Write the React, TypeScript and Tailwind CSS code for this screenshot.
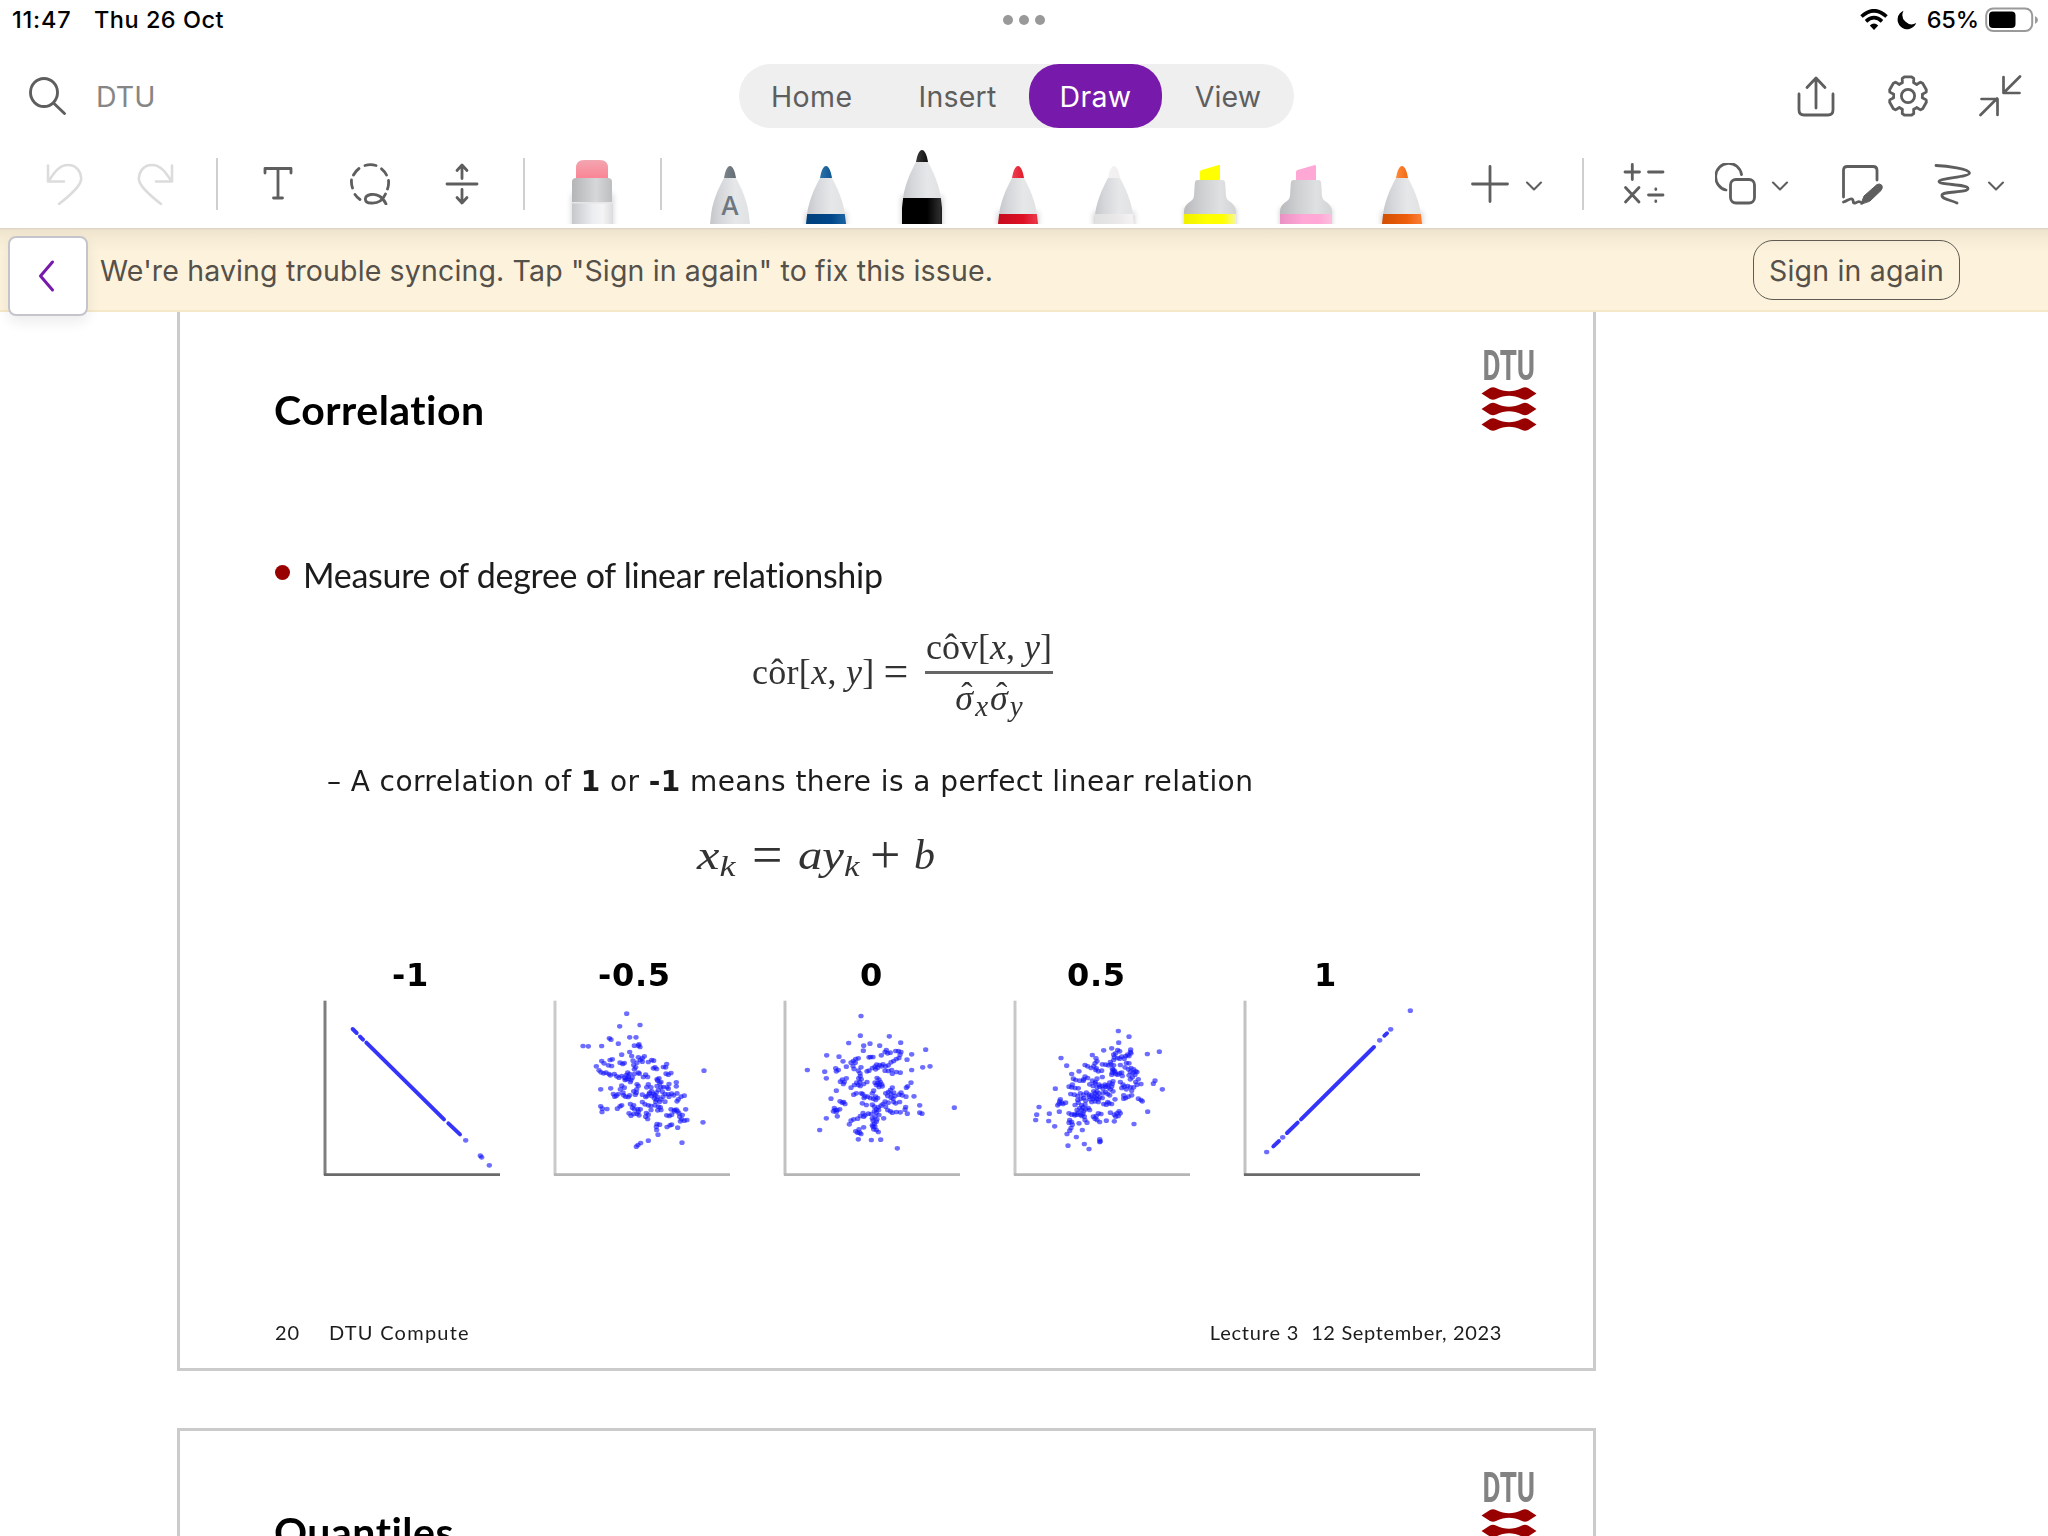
import React from "react";

const INK = "#5e5e5e";

function Ico({ w = 42, h = 42, className = "", sw = 2.8, color = INK, children }: { w?: number; h?: number; className?: string; sw?: number; color?: string; children: React.ReactNode }) {
  return (
    <svg width={w} height={h} viewBox={`0 0 ${w} ${h}`} className={`shrink-0 ${className}`} fill="none" stroke={color} strokeWidth={sw} strokeLinecap="round" strokeLinejoin="round">
      {children}
    </svg>
  );
}

const Chevron = ({ className = "" }: { className?: string }) => (
  <Ico w={18} h={12} sw={2.1} className={className}><path d="M2 2.5 L9 9.5 L16 2.5" /></Ico>
);

const Divider = ({ className = "" }: { className?: string }) => (
  <div className={`flex shrink-0 justify-center ${className}`}><div className="h-[52px] w-[2px] bg-[#cfcfcf]" /></div>
);

function gearPath() {
  const pts: string[] = [];
  for (let i = 0; i < 6; i++) {
    for (const [da, r] of [[-37, 14.6], [-23, 14.4], [-18, 18.6], [-11, 19.4], [11, 19.4], [18, 18.6], [23, 14.4]]) {
      const a = ((i * 60 + da - 90) * Math.PI) / 180;
      pts.push(`${(21 + r * Math.cos(a)).toFixed(2)} ${(21 + r * Math.sin(a)).toFixed(2)}`);
    }
  }
  return `M${pts.join("L")}Z`;
}

function Pen({ id, tip, band, selected = false, letter }: { id: string; tip: [string, string]; band?: [string, string, string]; selected?: boolean; letter?: string }) {
  return (
    <svg width="96" height="76" viewBox="-18 0 96 76" className="shrink-0">
      <defs>
        <linearGradient id={`${id}b`}><stop offset="0" stopColor="#bdbec1" /><stop offset=".3" stopColor="#d5d6d9" /><stop offset=".6" stopColor="#e6e7e9" /><stop offset="1" stopColor="#dfe0e2" /></linearGradient>
        <linearGradient id={`${id}t`}><stop offset="0" stopColor={tip[0]} /><stop offset="1" stopColor={tip[1]} /></linearGradient>
        {band && <linearGradient id={`${id}c`}><stop offset="0" stopColor={band[0]} /><stop offset=".6" stopColor={band[1]} /><stop offset=".85" stopColor={band[2]} /><stop offset="1" stopColor={band[1]} /></linearGradient>}
        <clipPath id={`${id}k`}><path d="M24 30 H36 C42 41 48 54 49.3 70 L50 76 V100 H10 V76 L10.7 70 C12 54 18 41 24 30Z" /></clipPath>
        <filter id={`${id}f`} x="-50%" y="-50%" width="200%" height="200%"><feGaussianBlur stdDeviation="3" /></filter>
      </defs>
      <g transform={selected ? "translate(0 -16)" : undefined}>
        {band && <rect x="10" y="64" width="40" height="40" fill="#000" opacity=".22" filter={`url(#${id}f)`} />}
        <g clipPath={`url(#${id}k)`}>
          <rect x="5" y="28" width="50" height="80" fill={`url(#${id}b)`} />
          {band && <rect x="5" y="66" width="50" height="40" fill={`url(#${id}c)`} />}
        </g>
        <path d="M24 30 C25 24 27 18 30 18 C33 18 35 24 36 30Z" fill={`url(#${id}t)`} />
        {letter && <text x="30" y="66.5" textAnchor="middle" fontFamily="Inter, sans-serif" fontWeight="500" fontSize="26" fill="#6c7782">{letter}</text>}
      </g>
    </svg>
  );
}

function Marker({ id, c }: { id: string; c: [string, string, string] }) {
  return (
    <svg width="96" height="76" viewBox="-18 0 96 76" className="shrink-0">
      <defs>
        <linearGradient id={`${id}b`}><stop offset="0" stopColor="#b9babd" /><stop offset=".35" stopColor="#cfd0d2" /><stop offset=".7" stopColor="#dfe0e2" /><stop offset="1" stopColor="#d3d4d6" /></linearGradient>
        <linearGradient id={`${id}c`}><stop offset="0" stopColor={c[0]} /><stop offset=".45" stopColor={c[1]} /><stop offset=".75" stopColor={c[1]} /><stop offset="1" stopColor={c[2]} /></linearGradient>
        <filter id={`${id}f`} x="-50%" y="-50%" width="200%" height="200%"><feGaussianBlur stdDeviation="2.5" /></filter>
      </defs>
      <rect x="4" y="60" width="52" height="30" fill="#000" opacity=".2" filter={`url(#${id}f)`} />
      <path d="M20 32 V24 Q20 22.5 21.5 22 L38 17.2 Q40 16.6 40 18.5 V32Z" fill={c[1]} />
      <path d="M18 32 H42 Q45 32 45.2 35 L46 48 Q46.2 51 49 53 Q56 57 56 64 V66 H4 V64 Q4 57 11 53 Q13.8 51 14 48 L14.8 35 Q15 32 18 32Z" fill={`url(#${id}b)`} />
      <rect x="4" y="66" width="52" height="10" fill={`url(#${id}c)`} />
    </svg>
  );
}

function Eraser() {
  return (
    <svg width="100" height="76" viewBox="0 0 100 76" className="shrink-0">
      <defs>
        <linearGradient id="erp" x1="0" y1="0" x2="0" y2="1"><stop offset="0" stopColor="#f2a6b0" /><stop offset="1" stopColor="#fb8394" /></linearGradient>
        <linearGradient id="erg"><stop offset="0" stopColor="#b4b5b7" /><stop offset=".6" stopColor="#d6d7d9" /><stop offset="1" stopColor="#bdbec0" /></linearGradient>
        <linearGradient id="erw"><stop offset="0" stopColor="#c6c7ca" /><stop offset=".5" stopColor="#ecedf0" /><stop offset=".75" stopColor="#f4f4f6" /><stop offset="1" stopColor="#dcdcdf" /></linearGradient>
        <filter id="erf" x="-50%" y="-50%" width="200%" height="200%"><feGaussianBlur stdDeviation="3" /></filter>
      </defs>
      <rect x="30" y="46" width="41" height="40" fill="#000" opacity=".18" filter="url(#erf)" />
      <path d="M34 31 V20 Q34 12 42 12 H58 Q66 12 66 20 V31Z" fill="url(#erp)" />
      <path d="M30 54 V34 Q30 30 34 30 H66 Q70 30 70 34 V54Z" fill="url(#erg)" />
      <rect x="30" y="54" width="41" height="22" fill="url(#erw)" />
      <rect x="30" y="54" width="41" height="1.5" fill="#e6e6e8" />
    </svg>
  );
}

/* Scatter samples, three units per pixel; x is measured from the vertical axis. */
const NEG_HALF = "215,191 194,229 255,225 163,265 168,269 224,262 243,262 190,281 84,288 100,289 140,288 238,287 250,287 255,291 252,283 224,306 200,314 230,318 172,328 165,330 140,333 147,340 124,349 170,348 160,346 195,338 208,339 203,342 250,322 262,325 268,319 256,330 290,330 296,332 234,332 280,336 262,335 246,338 236,345 242,352 238,358 300,352 305,357 295,355 335,342 332,352 325,351 340,374 348,369 333,371 132,361 138,367 146,370 153,368 162,372 166,376 178,372 185,379 192,383 200,378 209,383 214,388 220,380 224,372 228,390 232,383 226,396 238,372 218,368 214,375 250,368 253,371 265,381 278,381 272,374 220,386 210,390 312,385 308,392 318,396 314,400 306,388 364,397 364,409 137,418 167,415 200,407 208,413 196,418 246,403 250,408 245,418 280,403 275,412 288,412 318,412 325,411 336,412 340,416 342,402 306,408 310,420 304,428 290,424 296,432 284,428 300,436 308,441 290,438 298,445 305,449 314,455 302,455 318,448 324,440 330,432 322,425 175,432 184,437 179,440 190,432 206,436 212,440 220,441 224,436 236,424 241,434 244,428 204,428 262,434 272,441 282,432 276,438 340,433 350,431 356,436 366,430 378,440 388,437 370,448 366,454 342,440 330,455 137,469 142,476 156,477 141,486 187,476 195,469 200,466 226,462 236,466 232,473 238,478 248,477 256,478 250,485 262,456 270,463 280,466 288,468 300,466 310,470 316,472 318,480 308,481 222,490 228,497 236,492 246,491 252,496 274,489 280,494 272,500 278,507 288,480 348,478 358,484 364,479 368,484 372,490 358,480 335,496 343,498 350,494 374,500 382,495 392,478 380,508 388,512 396,510 376,514 306,522 314,524 304,530 305,540 345,526 336,531 350,524 368,533 309,554 280,572 257,579 244,590 249,585 381,578 447,362 444,517";
const ZERO = "228,198 226,257 313,259 191,279 236,287 255,281 284,287 347,278 422,299 125,316 162,320 174,334 235,302 304,300 300,306 308,310 316,308 332,303 340,303 348,306 345,314 289,316 257,321 264,321 252,322 212,327 220,325 205,333 198,338 211,338 380,313 366,329 342,324 334,327 326,333 318,337 152,355 154,364 160,360 184,350 204,348 207,357 228,352 275,344 284,345 290,349 294,343 270,350 262,354 278,353 302,349 310,346 300,362 310,363 320,360 322,371 334,366 346,368 246,364 252,362 272,358 67,360 119,365 124,385 220,362 225,370 226,378 221,385 229,388 172,389 178,396 184,385 175,402 166,395 224,396 215,398 208,405 198,413 226,408 236,402 246,396 220,405 276,384 282,389 286,396 278,399 270,398 290,403 282,404 292,409 282,411 274,405 380,360 413,352 435,349 378,398 368,409 364,413 154,422 206,434 214,430 233,432 240,439 248,440 256,444 262,430 266,422 272,440 278,444 265,446 272,450 237,444 229,430 322,413 316,420 310,426 318,432 326,428 308,438 318,443 330,438 302,430 324,446 348,428 352,436 342,434 363,440 387,439 138,446 165,454 172,458 180,462 176,456 148,474 156,480 145,484 154,486 164,478 157,499 124,505 150,480 232,460 244,465 262,464 268,470 274,478 280,472 288,467 281,480 274,488 268,484 300,455 294,462 310,458 326,456 332,460 344,456 302,470 308,480 316,484 322,488 334,486 346,487 362,471 367,491 360,479 404,466 404,488 411,491 508,473 234,489 240,496 250,491 258,492 236,500 226,498 218,506 206,508 198,512 193,523 262,505 270,500 276,508 282,495 274,515 268,521 264,512 262,526 270,530 266,538 274,540 280,546 264,530 296,505 236,532 222,538 212,544 224,548 228,552 218,548 220,568 259,570 287,569 104,540 337,595";
const POS_HALF = "310,243 342,260 311,278 266,301 290,295 308,300 314,304 302,310 347,299 348,310 338,314 342,318 332,318 346,306 397,312 433,305 232,315 243,325 246,334 240,340 262,343 138,324 155,347 210,345 218,349 236,349 228,354 244,355 250,364 242,360 260,362 272,344 280,346 288,343 296,346 286,336 298,322 308,324 314,326 296,314 320,320 328,326 296,330 334,339 342,340 316,345 330,352 340,358 348,354 356,358 362,364 354,368 366,366 346,366 360,374 352,382 346,388 342,376 292,356 298,362 292,368 302,372 308,374 314,370 300,366 290,374 320,368 322,378 294,360 170,372 192,364 175,386 182,390 194,392 205,392 210,380 218,384 206,388 262,381 241,396 232,392 246,386 162,410 172,404 180,414 190,415 170,412 224,403 234,408 240,400 246,412 254,410 262,408 270,404 278,406 284,398 292,402 290,410 286,418 280,412 294,394 272,410 264,416 252,404 316,396 324,404 328,410 320,414 338,408 346,412 334,418 362,396 370,388 378,402 366,404 356,412 350,422 415,401 420,392 442,418 121,416 167,432 178,434 188,438 196,430 206,434 214,428 222,440 230,436 238,440 246,436 254,442 240,430 246,424 252,430 236,424 244,446 234,446 226,448 250,448 240,454 250,456 230,456 222,434 198,446 206,444 212,452 188,450 264,430 272,426 284,436 278,432 262,444 294,424 136,448 140,458 132,461 128,466 144,462 152,458 134,454 326,436 332,444 340,440 326,446 350,436 370,446 378,450 382,454 72,471 65,494 62,510 103,491 101,513 133,485 119,529 180,465 190,458 200,466 210,464 194,474 186,480 200,480 206,484 190,488 212,478 220,474 224,480 204,472 266,462 274,464 282,460 290,462 300,448 278,456 162,490 170,494 178,492 186,494 196,494 204,492 208,500 210,510 216,518 200,498 164,510 170,516 162,518 172,524 168,534 164,542 156,552 192,520 202,540 180,496 235,500 240,506 246,510 254,516 244,498 250,490 258,492 286,488 298,494 306,490 312,484 310,498 302,500 316,490 274,512 298,514 398,485 357,522 184,561 159,587 208,582 222,597 254,568 256,574 254,576";

type PlotData = { label: string; pad: string; pts?: string; axisY: string; axisX: string; segs?: number[][]; dots?: number[][] };
const PLOTS: PlotData[] = [
  { label: "-1", pad: "pl-[71px]", axisY: "#7e7e7e", axisX: "#6a6a6a", segs: [[83, 237, 95, 249], [105, 260, 114, 269], [124, 278, 357, 508], [370, 520, 405, 553]], dots: [[422, 571], [466, 617], [470, 622], [493, 646]] },
  { label: "-0.5", pad: "pl-[47px]", axisY: "#cacaca", axisX: "#b5b5b5", pts: NEG_HALF },
  { label: "0", pad: "pl-[79px]", axisY: "#c2c2c2", axisX: "#b5b5b5", pts: ZERO },
  { label: "0.5", pad: "pl-[56px]", axisY: "#c8c8c8", axisX: "#b5b5b5", pts: POS_HALF },
  { label: "1", pad: "pl-[73px]", axisY: "#c2c2c2", axisX: "#6a6a6a", segs: [[85, 589, 102, 573], [126, 549, 158, 518], [168, 508, 387, 291], [418, 257, 426, 250]], dots: [[65, 606], [113, 562], [404, 271], [437, 238], [496, 182]] },
];

function Plot({ d }: { d: PlotData }) {
  const pts = d.pts ? d.pts.split(" ").map((p) => p.split(",").map(Number)) : d.dots || [];
  return (
    <div className="w-[230px]">
      <div className={`h-[40px] whitespace-nowrap font-['DejaVu_Sans'] text-[32px] font-bold leading-[40px] tracking-[0.7px] text-black ${d.pad}`}>{d.label}</div>
      <svg width="230" height="185" viewBox="-12 135 690 555" className="block">
        <path d="M0 152V676" stroke={d.axisY} strokeWidth="9" />
        <path d="M-3 674H525" stroke={d.axisX} strokeWidth="8" />
        {(d.segs || []).map((s, i) => <line key={i} x1={s[0]} y1={s[1]} x2={s[2]} y2={s[3]} stroke="#3434fb" strokeWidth="12" strokeLinecap="round" />)}
        {pts.map((p, i) => <ellipse key={i} cx={p[0]} cy={p[1]} rx="8" ry="7" fill="#1414ff" opacity=".62" />)}
      </svg>
    </div>
  );
}

function Logo() {
  return (
    <div className="flex w-[56px] flex-col items-center">
      <div className="flex h-[34px] w-[56px] items-center justify-center">
        <span className="origin-center scale-x-[0.66] whitespace-nowrap font-['Roboto'] text-[42px] font-bold leading-[34px] text-[#828282]">DTU</span>
      </div>
      <svg width="56" height="48" viewBox="0 0 56 48" className="mt-[2px] block" fill="#990000">
        {[8.5, 24, 39.5].map((y) => (
          <path key={y} transform={`translate(0 ${y})`} d="M.5 0 L9 -5.5 Q12 -7 15 -5.5 Q22 -2.2 28 -2.2 Q34 -2.2 41 -5.5 Q44 -7 47 -5.500 L55.500 0 L47 5.500 Q44 7 41 5.5 Q34 2.200 28 2.200 Q22 2.200 15 5.500 Q12 7 9 5.500Z" />
        ))}
      </svg>
    </div>
  );
}

function SlideHeader({ title }: { title: string }) {
  return (
    <div className="flex h-[241px] items-start justify-between pl-[94px] pr-[56px] pt-[40px]">
      <h1 className="mt-[37px] whitespace-nowrap font-['Lato'] text-[41px] font-bold leading-[48px] tracking-[0.5px] text-black [font-variant-ligatures:none]">{title}</h1>
      <Logo />
    </div>
  );
}

const Hatted = ({ children }: { children: React.ReactNode }) => (
  <span className="relative inline-block"><i>{children}</i><span className="absolute left-[6px] top-[-3px] text-[34px] leading-[40px]">ˆ</span></span>
);

export default function App() {
  return (
    <div className="flex h-[1536px] w-[2048px] flex-col overflow-hidden bg-white font-['Inter',sans-serif] text-[#5e5e5e]">
      {/* Status bar */}
      <div className="grid h-[40px] shrink-0 grid-cols-3 items-center pl-[12px] pr-[12px] text-[23.5px] font-medium text-black">
        <div className="flex gap-[20px] whitespace-nowrap"><span className="w-[62px] tracking-[0.8px]">11:47</span><span className="tracking-[0.5px]">Thu 26 Oct</span></div>
        <div className="flex justify-center gap-[6px]">
          <i className="h-[10px] w-[10px] rounded-full bg-[#999]" /><i className="h-[10px] w-[10px] rounded-full bg-[#999]" /><i className="h-[10px] w-[10px] rounded-full bg-[#999]" />
        </div>
        <div className="mr-[-3px] flex items-center justify-end">
          <svg width="28" height="22" viewBox="0 0 28 22" className="mr-[9px]" fill="none" stroke="#000" strokeWidth="3.6">
            <path d="M1.5 7.5 Q14 -4 26.5 7.5" /><path d="M6 12.3 Q14 5 22 12.3" />
            <path d="M14 21 L9.8 16.5 Q14 12.5 18.2 16.5Z" fill="#000" stroke="none" />
          </svg>
          <svg width="20" height="20" viewBox="0 0 20 20" className="mr-[10px]"><path d="M6.5 .8 A9.6 9.6 0 1 0 19.2 13 A9.2 9.2 0 0 1 6.5 .8Z" fill="#000" /></svg>
          <span className="mr-[6px] tracking-[-0.1px]">65%</span>
          <svg width="54" height="26" viewBox="0 0 54 26"><rect x="1.2" y="1.5" width="46" height="22.5" rx="7" fill="none" stroke="#9a9a9a" strokeWidth="2" /><rect x="4" y="4.5" width="26.5" height="16.5" rx="4" /><path d="M50 9 Q53 10.5 53 13 Q53 15.5 50 17Z" fill="#9a9a9a" /></svg>
        </div>
      </div>

      {/* Title bar */}
      <div className="flex h-[100px] shrink-0 items-center pt-[12px]">
        <Ico w={40} h={40} className="ml-[28px]" sw={2.9}><ellipse cx="16" cy="16.5" rx="13.5" ry="14" /><path d="M25.5 27 L36.5 37.5" /></Ico>
        <span className="ml-[28px] mt-[2px] w-[643px] text-[28.5px] tracking-[0.1px] text-[#868686]">DTU</span>
        <nav className="flex h-[64px] w-[555px] shrink-0 rounded-full bg-[#efefef] text-[28.5px] leading-[65px]">
          <span className="w-[147px] pl-[32px] tracking-[0.4px]">Home</span>
          <span className="w-[143px] text-center tracking-[0.2px]">Insert</span>
          <span className="w-[133px] rounded-[30px] bg-[#7719aa] text-center tracking-[0.3px] text-white">Draw</span>
          <span className="w-[132px] text-center tracking-[0.1px]">View</span>
        </nav>
        <Ico className="ml-[501px]"><path d="M21 33 V4 M12 12.5 L21 3 L30 12.5 M4 19 V35 Q4 40 9 40 H33 Q38 40 38 35 V19" /></Ico>
        <Ico className="ml-[50px]"><path d={gearPath()} /><circle cx="21" cy="21" r="6.6" /></Ico>
        <Ico className="ml-[49px]" w={44} sw={2.7}><path d="M42 1.5 L26 17.5 M25.5 2 V18 H41.5 M2.5 40 L19 23.5 M3.5 24 H19.5 V40" /></Ico>
      </div>

      {/* Ink toolbar */}
      <div className="flex h-[88px] shrink-0 items-center pl-[20px]">
        <div className="flex w-[90px] justify-center"><Ico sw={2.6} color="#dcdcdc"><path d="M4 2.5 V18.5 H20 M5 17.5 C10 10 15 2 24 2 C33 2 38 10 37 17 C36 24 24 34 15 41" /></Ico></div>
        <div className="flex w-[90px] justify-center"><Ico sw={2.6} color="#dcdcdc"><path d="M38 2.5 V18.5 H22 M37 17.5 C32 10 27 2 18 2 C9 2 4 10 5 17 C6 24 18 34 27 41" /></Ico></div>
        <Divider className="w-[34px]" />
        <div className="flex w-[88px] justify-center"><Ico><path d="M8 10 V5.5 H34 V10 M21 5.5 V35 M16.5 35 H25.5" /></Ico></div>
        <div className="flex w-[96px] justify-center">
          <Ico><path d="M16 2.5 A19 19 0 0 1 27 2.5 M32.5 5.8 A18 18 0 0 1 37.5 12 M39.5 17.5 A19 19 0 0 1 38.5 26 M10 5.5 A18 18 0 0 0 4.5 12 M2.5 17 A19 19 0 0 0 3.5 25 M6 31.5 A18 18 0 0 0 11 36.5" /><path d="M37 41 C34 34 28 30.5 22 31.5 C14 33 15 40 22 40 C29 40.5 34 37 36.5 31" /></Ico>
        </div>
        <div className="flex w-[87px] justify-center"><Ico><path d="M6 21 H36 M21 15.5 V2.5 M16 7.5 L21 2 L26 7.5 M21 26.5 V39.5 M16 34.5 L21 40 L26 34.5" /></Ico></div>
        <Divider className="w-[37px]" />
        <div className="self-end pb-[4px]"><Eraser /></div>
        <Divider className="w-[38px]" />
        <div className="ml-[2px] flex self-end pb-[4px]">
          <Pen id="p0" tip={["#7d858c", "#646c73"]} letter="A" />
          <Pen id="p1" tip={["#2b72ab", "#0f5691"]} band={["#003f7a", "#00478a", "#1a61a0"]} />
          <Pen id="p2" tip={["#3a3a3a", "#101010"]} band={["#000", "#000", "#2c2c2c"]} selected />
          <Pen id="p3" tip={["#ee4050", "#e01a2c"]} band={["#c00c1c", "#dd1024", "#ea3548"]} />
          <Pen id="p4" tip={["#f3f1f2", "#f1eff0"]} band={["#dedede", "#ebe9e9", "#f4f2f2"]} />
          <Marker id="m0" c={["#f0f000", "#ffff00", "#f7f79a"]} />
          <Marker id="m1" c={["#e892c4", "#ffa8d6", "#fbbfdf"]} />
          <Pen id="p5" tip={["#ff8a3c", "#f06a14"]} band={["#cc4b00", "#ee5f0c", "#f97b30"]} />
        </div>
        <Ico w={40} h={40} className="ml-[20px]"><path d="M2.5 20 H37.5 M20 2.5 V37.5" /></Ico>
        <Chevron className="ml-[15px] mt-[4px]" />
        <Divider className="w-[80px]" />
        <Ico><path d="M2 9 H16.5 M9.3 1.500 V16.500 M25.5 9 H40 M2.5 24.500 L16 39 M16 24.500 L2.5 39 M25.5 32 H40 M32.8 26 V26.5 M32.8 38 V38.5" /></Ico>
        <Ico className="ml-[50px]"><path d="M26.5 11.5 A13 13.5 0 1 0 11 27" /><rect x="15.5" y="16.5" width="24" height="23.5" rx="5.5" /></Ico>
        <Chevron className="ml-[14px] mt-[4px]" />
        <Ico className="ml-[52px]">
          <path d="M2.5 34 V7.5 Q2.5 3.5 6.5 3.5 H32 Q36 3.5 36 7.5 V17" />
          <path d="M2.5 39 C6 38 9 35 11 36 C13.5 37.5 11 40.5 14 40 C17 39.5 17 37 21 40" />
          <path d="M20 41 L23 33 L36 21.5 Q39 20 41 22.5 Q42 25 40 27.5 L29 38 Z" fill={INK} strokeWidth="1" />
        </Ico>
        <Ico w={40} h={42} className="ml-[50px]"><path d="M3 2.5 C14 3 36 6 36.5 10 C37 14 6 15 6 18.5 C6 22 35 21 35 25.5 C35 30 10 28 9 32 C8 36 18 37 24 40" /></Ico>
        <Chevron className="ml-[14px] mt-[4px]" />
      </div>

      {/* Sync banner */}
      <div className="relative z-10 flex h-[84px] shrink-0 items-start border-b-2 border-[#f5e8c8] bg-[linear-gradient(#d9d1bf_0px,#efe4cd_2px,#f5ebd4_10px,#fdf3dd_24px)] text-[28.5px] text-[#55504a]">
        <button className="ml-[8px] mt-[8px] flex h-[80px] w-[80px] shrink-0 items-center justify-center rounded-[8px] border-2 border-[#c4c4cc] bg-white pr-[2px] shadow-[0_6px_14px_rgba(0,0,0,0.08)]">
          <Ico w={20} h={34} color="#7719aa" sw={3}><path d="M15.5 3 L3.5 17 L15.5 31" /></Ico>
        </button>
        <span className="ml-[12px] mt-[23px] whitespace-nowrap leading-[40px] tracking-[0.15px]">We're having trouble syncing. Tap "Sign in again" to fix this issue.</span>
        <button className="ml-auto mr-[88px] mt-[12px] h-[60px] w-[207px] shrink-0 whitespace-nowrap rounded-[20px] border-[1.5px] border-[#5f5a52] text-center leading-[60px] tracking-[0.2px]">Sign in again</button>
      </div>

      {/* Canvas */}
      <main className="h-[1224px] shrink-0 overflow-hidden pl-[177px]">
        <section className="mt-[-6px] h-[1065px] w-[1419px] border-[3px] border-[#cbcbcb] text-[#1c1c1c]">
          <div className="blur-[0.6px]">
            <SlideHeader title="Correlation" />
            <div className="flex h-[48px] items-center pl-[95px]">
              <i className="mt-[-4px] h-[15px] w-[15px] rounded-full bg-[#990000]" />
              <span className="ml-[13px] mt-[1px] whitespace-nowrap font-['Lato'] text-[34px] leading-[48px] tracking-[-0.28px] [font-variant-ligatures:none]">Measure of degree of linear relationship</span>
            </div>
            <div className="flex h-[148px] items-center whitespace-nowrap pl-[572px] font-['Liberation_Serif'] text-[36px] text-[#333]">
              <span className="w-[130px] leading-[40px] tracking-[0.3px]">côr[<i>x</i>, <i>y</i>]</span>
              <span className="w-[28px] text-center text-[44px] leading-[40px]">=</span>
              <span className="ml-[15px] flex w-[128px] flex-col items-center">
                <span className="h-[44px] leading-[40px]">côv[<i>x</i>, <i>y</i>]</span>
                <span className="h-[3px] w-full bg-[#666]" />
                <span className="flex h-[44px] gap-[2px] pt-[4px] leading-[40px]">
                  <Hatted>σ</Hatted><i className="mt-[8px] text-[29px]">x</i>
                  <Hatted>σ</Hatted><i className="mt-[8px] text-[29px]">y</i>
                </span>
              </span>
            </div>
            <p className="mt-[16px] whitespace-nowrap pl-[147px] font-['DejaVu_Sans'] text-[28px] leading-[40px] tracking-[0.41px]">– A correlation of <b>1</b> or <b>-1</b> means there is a perfect linear relation</p>
            <p className="mt-[28px] flex h-[50px] whitespace-nowrap pl-[517px] font-['Liberation_Serif'] text-[42px] leading-[50px] text-[#333]">
              <span className="w-[55px]"><i className="inline-block origin-left scale-x-[1.2]">x<span className="relative top-[7px] text-[30px]">k</span></i></span>
              <span className="w-[36px] text-[54px]">=</span>
              <span className="ml-[10px] w-[70px]"><i className="inline-block origin-left scale-x-[1.16]">ay<span className="relative top-[7px] text-[30px]">k</span></i></span>
              <span className="ml-[2px] w-[36px] text-[54px]">+</span>
              <i className="ml-[8px]">b</i>
            </p>
            <div className="mt-[75px] flex pl-[141px]">{PLOTS.map((d) => <Plot key={d.label} d={d} />)}</div>
            <footer className="mt-[137px] flex whitespace-nowrap pl-[95px] pr-[91px] font-['Lato'] text-[20px] leading-[30px] [font-variant-ligatures:none]">
              <span className="w-[54px] tracking-[1px]">20</span><span className="tracking-[1.25px]">DTU Compute</span>
              <span className="ml-auto tracking-[0.8px]">Lecture 3</span><span className="ml-[12px] tracking-[0.65px]">12 September, 2023</span>
            </footer>
          </div>
        </section>
        <section className="mt-[57px] h-[1065px] w-[1419px] border-[3px] border-[#cbcbcb]">
          <div className="blur-[0.6px]"><SlideHeader title="Quantiles" /></div>
        </section>
      </main>
    </div>
  );
}
